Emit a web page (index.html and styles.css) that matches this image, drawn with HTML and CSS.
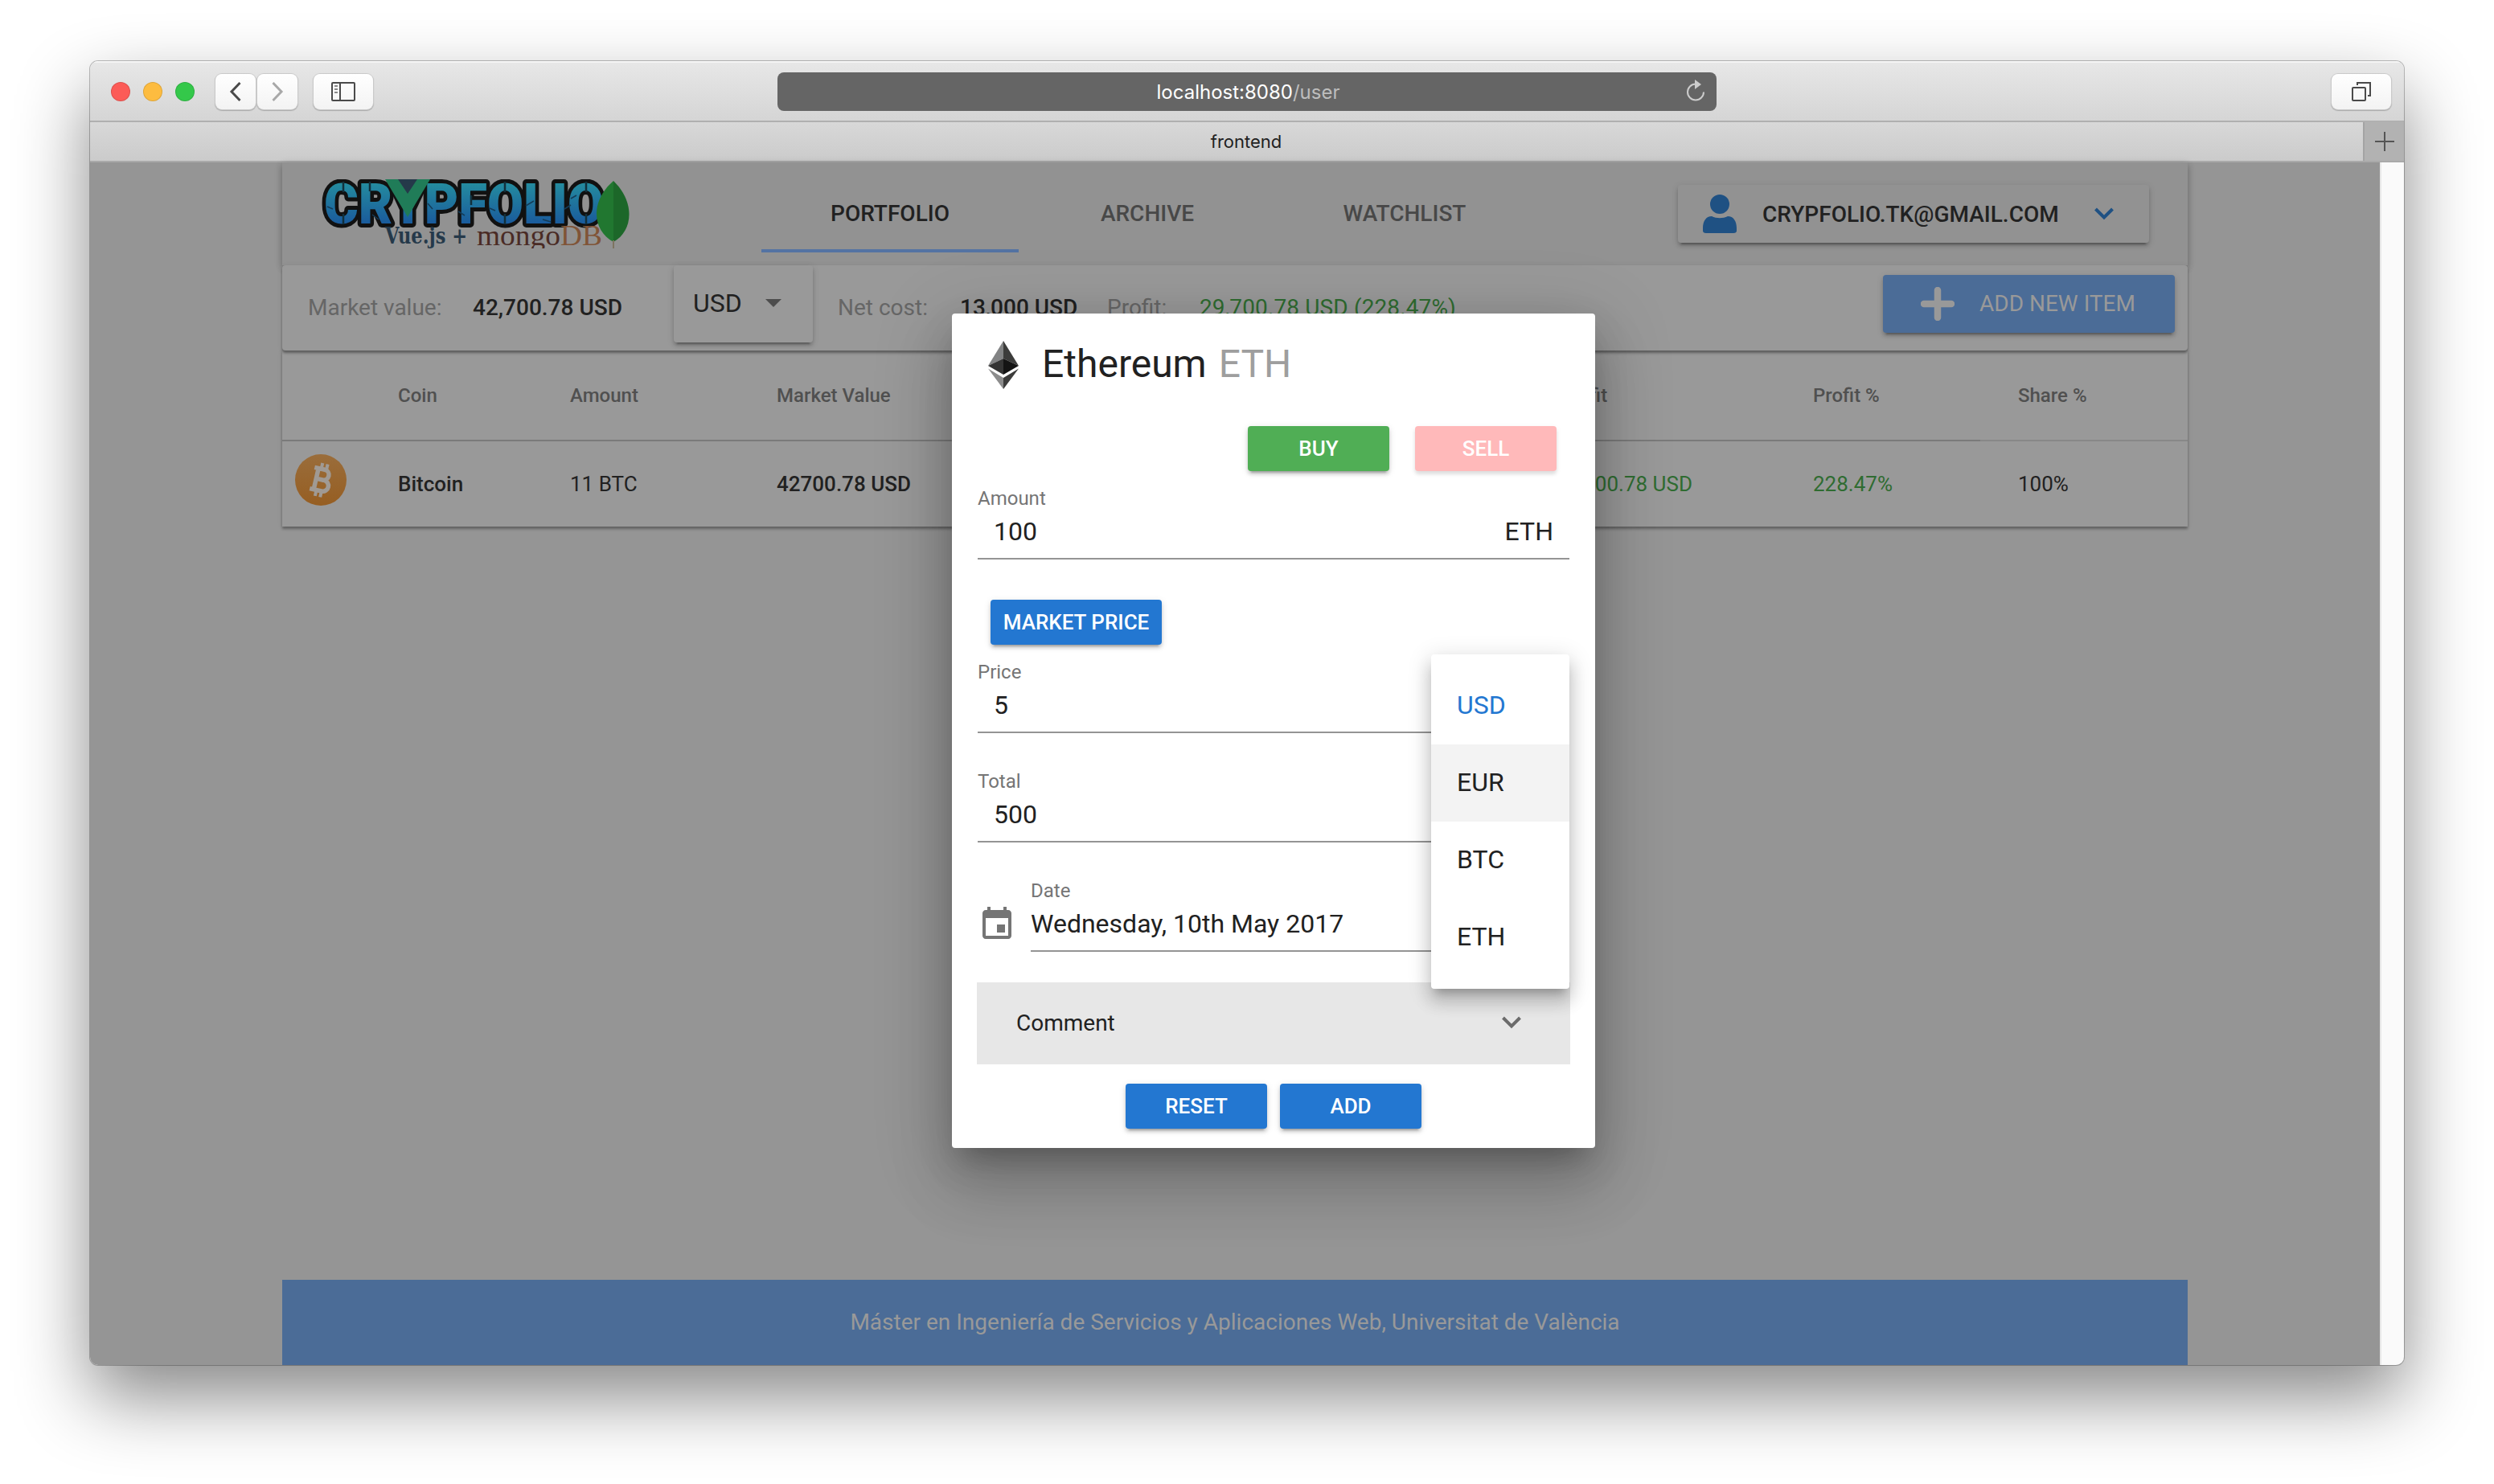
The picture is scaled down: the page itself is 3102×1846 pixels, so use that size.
FILE: index.html
```html
<!DOCTYPE html>
<html lang="en">
<head>
<meta charset="utf-8">
<title>frontend</title>
<link rel="stylesheet" href="styles.css">
</head>
<body>
<div class="window">
  <div class="toolbar">
    <div class="tools">
      <div class="lights"><i class="light red"></i><i class="light yellow"></i><i class="light green"></i></div>
      <div class="history">
        <span class="tool nav"><svg width="18" height="28" viewBox="0 0 18 28"><path d="M14.500 3 4 14l10.500 11" fill="none" stroke="#4a4a4a" stroke-width="3"/></svg></span>
        <span class="tool nav"><svg width="18" height="28" viewBox="0 0 18 28"><path d="M3.500 3 14 14 3.500 25" fill="none" stroke="#a8a8a8" stroke-width="3"/></svg></span>
      </div>
      <span class="tool wide"><svg width="30" height="24" viewBox="0 0 30 24" fill="none" stroke="#4a4a4a" stroke-width="2"><rect x="1" y="1" width="28" height="22" rx="1"/><path d="M11 1v22"/><path d="M4 5h4M4 9h4M4 13h4" stroke="#888"/></svg></span>
    </div>
    <div class="url"><span class="address">localhost:8080<em>/user</em></span>
      <svg class="reload" width="24" height="28" viewBox="0 0 24 28"><path d="M12 5.500a10 10 0 1 0 10 10" fill="none" stroke="#ccc" stroke-width="2"/><path d="M11 0l8 6-8 6z" fill="#ccc"/></svg>
    </div>
    <div class="tools end"><span class="tool wide"><svg width="26" height="26" viewBox="0 0 26 26" fill="none" stroke="#4a4a4a" stroke-width="2"><rect x="2" y="8" width="16" height="16" rx="1"/><path d="M8 5V2h16v16h-3"/></svg></span></div>
  </div>
  <div class="tabbar"><span class="tab">frontend</span><span class="newtab"><svg width="24" height="24" viewBox="0 0 24 24"><path d="M12 0v24M0 12h24" stroke="#555" stroke-width="2"/></svg></span></div>
  <div class="viewport">
    <div class="page">
      <header class="header">
        <svg class="logo" width="384" height="86" viewBox="0 0 384 86">
          <defs><linearGradient id="blue" gradientUnits="userSpaceOnUse" x1="0" y1="4" x2="0" y2="56"><stop offset="0" stop-color="#248c9f"/><stop offset="1" stop-color="#1a5a9c"/></linearGradient></defs>
          <text class="logo-main" x="4" y="55" textLength="348" lengthAdjust="spacingAndGlyphs" fill="url(#blue)">CRYPFOLIO</text>
          <path d="M28 3v13M28 43v13M229 3v13M229 43v13M330 3v13M330 43v13M61 3v12M187 20v12" stroke="#12303c" stroke-width="2.500"/>
          <path d="M8 34l7 3M64 44l8 6M133 30l6 7M171 40l8 5M210 36l7 3M255 33l10-6M276 50l10 3M303 37l8-5M318 20l-7 4" stroke="#143c58" stroke-width="1.500"/>
          <path d="M80 0h56L108 47z" fill="#207c58"/><path d="M96 0h24l-12 18z" fill="#25394a"/>
          <text class="logo-vue" x="80" y="80" textLength="102" lengthAdjust="spacingAndGlyphs" fill="#25394a">Vue.js +</text>
          <text class="logo-mongo" x="194" y="82" textLength="156" lengthAdjust="spacingAndGlyphs" fill="#4a2b25">mongo<tspan fill="#805437">DB</tspan></text>
          <path d="M364 2c-30 26-26 62 0 76z" fill="#217730"/><path d="M364 2c27 26 25 62 0 76z" fill="#1c6729"/><path d="M364 76v10" stroke="#7d7460" stroke-width="2"/>
        </svg>
        <nav class="nav-tabs"><a class="active">PORTFOLIO</a><a>ARCHIVE</a><a>WATCHLIST</a></nav>
        <div class="account">
          <svg width="42" height="48" viewBox="0 0 42 48" fill="#1f5183"><ellipse cx="21" cy="12" rx="12" ry="12"/><path d="M11 27c6 3 14 3 20 0 7 0 11 6 11 15v3q0 3-4 3H4q-4 0-4-3v-3c0-9 4-15 11-15z"/></svg>
          <span class="email">CRYPFOLIO.TK@GMAIL.COM</span>
          <svg width="26" height="16" viewBox="0 0 26 16"><path d="M2.500 2 13 12.500 23.500 2" fill="none" stroke="#1f5183" stroke-width="4"/></svg>
        </div>
      </header>
      <section class="summary">
        <span class="lbl s1">Market value:</span><span class="val s2">42,700.78 USD</span>
        <span class="currency">USD<svg width="20" height="10" viewBox="0 0 20 10"><path d="M0 0h20L10 10z" fill="#4d4d4d"/></svg></span>
        <span class="lbl s3">Net cost:</span><span class="val s4">13,000 USD</span><span class="lbl s5">Profit:</span><span class="gain">29,700.78 USD (228.47%)</span>
        <span class="add"><svg width="42" height="42" viewBox="0 0 42 42"><path d="M21 4v34M4 21h34" stroke="#999" stroke-width="8.500" stroke-linecap="round"/></svg>ADD NEW ITEM</span>
      </section>
      <section class="table">
        <div class="row head"><span></span><span>Coin</span><span>Amount</span><span>Market Value</span><span>Profit</span><span>Profit %</span><span>Share %</span></div>
        <div class="divider"></div>
        <div class="row body">
          <span><svg class="btc" width="64" height="64" viewBox="0 0 64 64"><defs><linearGradient id="coin" x1="0" y1="0" x2="0" y2="1"><stop offset="0" stop-color="#9a6d3b"/><stop offset="1" stop-color="#965e22"/></linearGradient></defs><circle cx="32" cy="32" r="32" fill="url(#coin)"/><g transform="rotate(13 32 32)" fill="none" stroke="#a09a94" stroke-width="5.500"><path d="M21 18.500h13a6.500 6.500 0 0 1 0 13h-8M26 31.500h10a7 7 0 0 1 0 14H21M26 18v28"/><path d="M29.500 11v8M36 11v8M29.500 45v8M36 45v8" stroke-width="4"/></g></svg></span>
          <span class="strong">Bitcoin</span><span>11 BTC</span><span class="strong">42700.78 USD</span><span class="up">29700.78 USD</span><span class="up">228.47%</span><span>100%</span>
        </div>
      </section>
      <footer class="footer">Máster en Ingeniería de Servicios y Aplicaciones Web, Universitat de València</footer>
    </div>
    <div class="scrollbar"></div>
  </div>
</div>
<div class="dialog">
  <div class="title"><svg width="38" height="60" viewBox="0 0 38 60"><path d="M19 0v22L0 31z" fill="#828384"/><path d="M19 0v22l19 9z" fill="#3c3c3b"/><path d="M19 22v20L0 31z" fill="#343434"/><path d="M19 22v20l19-11z" fill="#141414"/><path d="M0 34.500 19 46v14z" fill="#8c8c8c"/><path d="M38 34.500 19 46v14z" fill="#3c3c3b"/></svg><span class="name">Ethereum</span><span class="symbol">ETH</span></div>
  <div class="sides"><span class="btn buy">BUY</span><span class="btn sell">SELL</span></div>
  <div class="field"><label>Amount</label><div class="input indent"><span>100</span><span>ETH</span></div></div>
  <div class="market"><span class="btn price-btn">MARKET PRICE</span></div>
  <div class="field"><label>Price</label><div class="input indent"><span>5</span></div></div>
  <div class="field gap"><label>Total</label><div class="input indent"><span>500</span></div></div>
  <div class="date gap">
    <svg width="36" height="40" viewBox="0 0 36 40"><path d="M28 22H18v10h10zM26 0v4H10V0H6v4H4C1.800 4 0 5.800 0 8v28c0 2.200 1.800 4 4 4h28c2.200 0 4-1.800 4-4V8c0-2.200-1.800-4-4-4h-2V0zm6 36H4V14h28z" fill="#757575"/></svg>
    <div class="field"><label>Date</label><div class="input"><span>Wednesday, 10th May 2017</span></div></div>
  </div>
  <div class="comment"><span>Comment</span><svg width="26" height="16" viewBox="0 0 26 16"><path d="M2.500 2 13 12.500 23.500 2" fill="none" stroke="#6b6b6b" stroke-width="4"/></svg></div>
  <div class="actions"><span class="btn">RESET</span><span class="btn">ADD</span></div>
  <div class="menu"><span class="selected">USD</span><span class="hover">EUR</span><span>BTC</span><span>ETH</span></div>
</div>
</body>
</html>
```
FILE: styles.css
```css
* { box-sizing: border-box; }
body { margin: 0; width: 3102px; height: 1846px; overflow: hidden; position: relative; background: #fff; font-family: Roboto, sans-serif; padding: 76px 112px; color: #212121; white-space: nowrap; }
svg { display: block; flex: none; }
.window { width: 2878px; height: 1622px; border-radius: 10px; overflow: hidden; display: flex; flex-direction: column; }
.window { box-shadow: 0 0 0 1px rgba(0,0,0,.25), 0 40px 90px rgba(0,0,0,.47); }
.toolbar { height: 76px; background: linear-gradient(#e7e7e7, #d5d5d5); border-top: 2px solid #f5f5f5; border-bottom: 2px solid #b0b0b0; display: flex; align-items: center; justify-content: space-between; padding: 0 16px 0 26px; }
.tools { width: 829px; display: flex; align-items: center; }
.tools.end { width: 839px; justify-content: flex-end; }
.lights { display: flex; gap: 16px; margin-right: 26px; }
.light { width: 24px; height: 24px; border-radius: 50%; border: 1px solid rgba(0,0,0,.12); }
.red { background: #fc5b57; }
.yellow { background: #fdbc40; }
.green { background: #34c84a; }
.history { display: flex; gap: 2px; margin-right: 20px; }
.tool { height: 44px; border-radius: 8px; background: linear-gradient(#fff, #f3f3f3); box-shadow: 0 0 0 1px #cacaca, 0 1px 1px 1px #aaa; display: flex; align-items: center; justify-content: center; }
.tool.nav { width: 50px; }
.tool.wide { width: 74px; }
.url { width: 1168px; height: 48px; border-radius: 8px; background: #656565; color: #fff; display: flex; align-items: center; justify-content: center; position: relative; font: 24px Inter, sans-serif; }
.address { padding-left: 3px; }
.url em { font-style: normal; color: #bdbdbd; }
.reload { position: absolute; right: 14px; top: 9px; }
.tabbar { height: 50px; background: linear-gradient(#d8d8d8, #cbcbcb); border-bottom: 2px solid #a9a9a9; display: flex; font: 22px/48px Inter, sans-serif; }
.tab { flex: 1; text-align: center; padding-left: 49px; }
.newtab { width: 51px; background: #b2b2b2; border-left: 2px solid #a4a4a4; display: flex; align-items: center; justify-content: center; }
.viewport { flex: 1; display: flex; background: #959595; }
.page { flex: 1; display: flex; flex-direction: column; padding: 0 239px; }
.scrollbar { width: 30px; background: #fafafa; border-left: 2px solid #e8e8e8; }
.header { height: 128px; background: #929292; display: flex; padding-left: 48px; box-shadow: 0 4px 8px rgba(0,0,0,.2), 0 2px 10px rgba(0,0,0,.14); }
.logo { margin-top: 21px; }
.logo-main { font: 900 71px Roboto, sans-serif; stroke: #111; stroke-width: 10px; stroke-linejoin: round; paint-order: stroke; }
.logo-vue { font: bold 27px "DejaVu Serif", serif; }
.logo-mongo { font: 35px "Liberation Serif", serif; }
.nav-tabs { display: flex; margin-left: 164px; height: 112px; }
.nav-tabs a { width: 320px; text-align: center; font-size: 28px; font-weight: 500; line-height: 128px; color: #484848; }
.nav-tabs .active { color: #212121; border-bottom: 4px solid #5473a3; }
.account { margin: 28px 0 0 180px; width: 586px; height: 72px; border-radius: 4px; display: flex; align-items: center; padding-left: 31px; font-size: 28px; font-weight: 500; background: #929292; }
.account, .currency, .add { box-shadow: 0 6px 2px -4px rgba(0,0,0,.25), 0 4px 4px rgba(0,0,0,.16), 0 2px 10px rgba(0,0,0,.12); }
.email { width: 444px; padding-left: 32px; }
.summary { height: 106px; background: #999; border-radius: 4px; display: flex; padding-left: 32px; font-size: 28px; line-height: 106px; position: relative; box-shadow: 0 3px 3px rgba(0,0,0,.35), 0 1px 6px rgba(0,0,0,.1); }
.lbl { color: #666; }
.val { font-weight: 500; }
.gain { color: #2f6c31; letter-spacing: .13px; }
.s1 { width: 205px; } .s2 { width: 250px; } .s3 { width: 152px; } .s4 { width: 183px; } .s5 { width: 115px; }
.currency { width: 173px; height: 96px; border-radius: 4px; line-height: 94px; font-size: 32px; padding: 0 39px 2px 24px; margin-right: 31px; display: flex; justify-content: space-between; align-items: center; }
.add { margin: 12px 16px 0 auto; width: 363px; height: 72px; line-height: 72px; border-radius: 4px; background: #4b6c97; color: #999; display: flex; align-items: center; padding-left: 47px; gap: 31px; }
.table { background: #999; box-shadow: 0 3px 3px rgba(0,0,0,.3), 0 1px 6px rgba(0,0,0,.1); }
.row { display: grid; grid-template-columns: 144px 214px 257px 974px 315px 255px 1fr; align-items: center; }
.head { height: 111px; font-size: 24px; font-weight: 500; color: #505050; }
.divider { height: 2px; background: linear-gradient(90deg, #7a7a7a 2112px, #888 2112px); }
.body { height: 106px; font-size: 26px; }
.btc { margin: -10px 0 0 16px; }
.strong { font-weight: 500; }
.up { color: #2f6c31; }
.footer { margin-top: auto; height: 106px; background: #4b6c97; color: #999; text-align: center; font-size: 28px; line-height: 106px; }
.dialog { position: absolute; left: 1184px; top: 390px; width: 800px; height: 1038px; background: #fff; border-radius: 4px; padding: 32px; box-shadow: 0 22px 30px -14px rgba(0,0,0,.2), 0 48px 76px 6px rgba(0,0,0,.14), 0 18px 92px 16px rgba(0,0,0,.12), 0 20px 50px rgba(0,0,0,.08); }
.title { display: flex; align-items: center; height: 64px; padding-left: 13px; font-size: 48px; }
.name { margin-left: 29px; line-height: 60px; padding-bottom: 2px; }
.symbol { margin-left: 15px; color: #9e9e9e; line-height: 60px; padding-bottom: 2px; }
.sides { display: flex; gap: 32px; justify-content: flex-end; margin: 44px 16px 0 0; }
.btn { width: 176px; height: 56px; border-radius: 4px; background: #2377d1; color: #fff; font-size: 26px; font-weight: 500; line-height: 56px; text-align: center; box-shadow: 0 6px 2px -4px rgba(0,0,0,.2), 0 4px 4px rgba(0,0,0,.14), 0 2px 10px rgba(0,0,0,.12); }
.buy { background: #50ae55; }
.sell { background: #ffb9ba; box-shadow: 0 4px 4px rgba(0,0,0,.1), 0 2px 8px rgba(0,0,0,.05); }
.field { height: 88px; margin-top: 22px; border-bottom: 2px solid #949494; flex: 1; }
.field label { display: block; font-size: 24px; line-height: 25px; color: #757575; }
.input { display: flex; justify-content: space-between; font-size: 32px; line-height: 56px; }
.indent { padding: 0 20px; }
.market { padding: 50px 0 0 16px; display: flex; }
.price-btn { width: 213px; }
.market + .field { margin-top: 22px; }
.gap, .date.gap .field { margin-top: 48px; }
.date { display: flex; margin-top: 0; }
.date svg { margin: 80px 24px 0 6px; }
.date.gap { margin-top: 0; }
.comment { height: 102px; margin: 38px -1px 0; background: #e7e7e7; display: flex; justify-content: space-between; align-items: center; padding: 0 60px 2px 49px; font-size: 28px; }
.actions { display: flex; justify-content: center; gap: 16px; margin-top: 24px; }
.menu { position: absolute; left: 596px; top: 424px; width: 172px; height: 416px; background: #fff; border-radius: 4px; padding: 16px 0; display: flex; flex-direction: column; font-size: 32px; box-shadow: 0 10px 10px -6px rgba(0,0,0,.2), 0 16px 20px 2px rgba(0,0,0,.14), 0 6px 28px 4px rgba(0,0,0,.12); }
.menu span { height: 96px; line-height: 94px; padding-left: 32px; }
.menu .selected { color: #2377d1; }
.menu .hover { background: #f3f3f3; }
```
